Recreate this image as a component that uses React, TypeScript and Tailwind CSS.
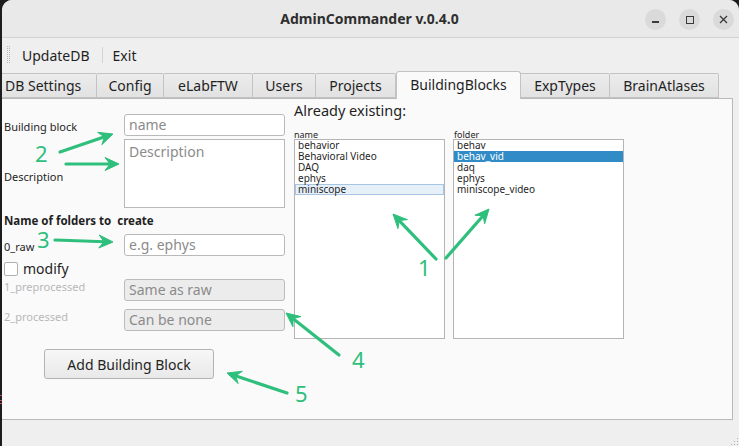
import React from "react";

const GREEN = "#2fbf7c";

function Arrow({ x1, y1, x2, y2 }: { x1: number; y1: number; x2: number; y2: number }) {
  const dx = x2 - x1;
  const dy = y2 - y1;
  const len = Math.sqrt(dx * dx + dy * dy);
  const ux = dx / len;
  const uy = dy / len;
  const nx = -uy;
  const ny = ux;
  const back = 14;
  const notch = 9;
  const half = 6.5;
  const bx = x2 - ux * back;
  const by = y2 - uy * back;
  const pts = [
    [x2, y2],
    [bx + nx * half, by + ny * half],
    [x2 - ux * notch, y2 - uy * notch],
    [bx - nx * half, by - ny * half],
  ]
    .map((p) => p.join(","))
    .join(" ");
  return (
    <g>
      <line
        x1={x1}
        y1={y1}
        x2={x2 - ux * (notch - 1)}
        y2={y2 - uy * (notch - 1)}
        stroke={GREEN}
        strokeWidth={3.2}
        strokeLinecap="round"
      />
      <polygon points={pts} fill={GREEN} stroke={GREEN} strokeWidth={1} strokeLinejoin="round" />
    </g>
  );
}

const tabs: { label: string; w: number; selected?: boolean; left?: boolean }[] = [
  { label: "DB Settings", w: 95, left: true },
  { label: "Config", w: 67 },
  { label: "eLabFTW", w: 89 },
  { label: "Users", w: 63 },
  { label: "Projects", w: 80 },
  { label: "BuildingBlocks", w: 125, selected: true },
  { label: "ExpTypes", w: 89 },
  { label: "BrainAtlases", w: 109 },
];

const names = ["behavior", "Behavioral Video", "DAQ", "ephys", "miniscope"];
const folders = ["behav", "behav_vid", "daq", "ephys", "miniscope_video"];

function TextInput({ placeholder, disabled }: { placeholder: string; disabled?: boolean }) {
  return (
    <div
      className={
        "w-[161px] h-[22px] rounded-[3px] border flex items-center pl-[4px] text-[14px] leading-[18px] text-[#8b8b8b] " +
        (disabled ? "bg-[#ececec] border-[#bcbcbc]" : "bg-white border-[#b9b9b9]")
      }
    >
      {placeholder}
    </div>
  );
}

export default function App() {
  return (
    <div
      className="relative w-[739px] h-[446px] overflow-hidden bg-[#1d1d1f] flex"
      style={{ fontFamily: '"Noto Sans", "DejaVu Sans", sans-serif' }}
    >
      {/* left desktop strip */}
      <div className="w-[2px] h-full relative">
        <div className="absolute left-0 top-[395px] w-[2px] h-[1px] bg-[#c0505a]" />
        <div className="absolute left-0 top-[400px] w-[2px] h-[1px] bg-[#c0505a]" />
        <div className="absolute left-0 top-[403px] w-[2px] h-[1px] bg-[#c0505a]" />
      </div>

      {/* window */}
      <div className="w-[737px] h-full rounded-t-[10px] bg-[#efefef] flex flex-col overflow-hidden">
        {/* title bar */}
        <div className="h-[38px] bg-[#e9e9e9] border-b border-[#d2d2d2] relative flex items-center justify-center shrink-0">
          <div className="text-[14px] font-bold text-[#2f2f2f] ml-[-2px] mt-[-1px]">AdminCommander v.0.4.0</div>
          <div className="absolute right-[5px] top-[9px] flex gap-[13px]">
            <div className="w-[21px] h-[21px] rounded-full bg-[#dadada] flex items-center justify-center">
              <div className="w-[7px] h-[1.5px] bg-[#3a3a3a] mt-[5px]" />
            </div>
            <div className="w-[21px] h-[21px] rounded-full bg-[#dadada] flex items-center justify-center">
              <div className="w-[8px] h-[8px] border border-[#3a3a3a]" />
            </div>
            <div className="w-[21px] h-[21px] rounded-full bg-[#dadada] flex items-center justify-center">
              <svg width="9" height="9" viewBox="0 0 9 9">
                <path d="M1 1 L8 8 M8 1 L1 8" stroke="#3a3a3a" strokeWidth="1.3" />
              </svg>
            </div>
          </div>
        </div>

        {/* menu bar */}
        <div className="h-[33px] flex items-center shrink-0 text-[14px] text-[#1f1f1f]">
          <div className="ml-[5px] w-[4px] h-[17px] flex gap-[1px]">
            <div className="w-[1px] h-full border-l border-dotted border-[#b8b8b8]" />
            <div className="w-[1px] h-full border-l border-dotted border-[#b8b8b8]" />
          </div>
          <div className="ml-[11px] mt-[1px]">UpdateDB</div>
          <div className="ml-[12px] w-[1px] h-[16px] bg-[#d4d4d4]" />
          <div className="ml-[10px] mt-[1px]">Exit</div>
        </div>

        {/* tabs */}
        <div className="h-[27px] flex items-end shrink-0 relative">
          {tabs.map((t) =>
            t.selected ? (
              <div
                key={t.label}
                style={{ width: t.w }}
                className="h-[28px] bg-[#fafafa] border border-b-0 border-[#c3c3c3] rounded-t-[3px] flex items-center justify-center text-[14px] text-[#1f1f1f] relative z-10 -mb-[1px] pb-[2px]"
              >
                {t.label}
              </div>
            ) : (
              <div
                key={t.label}
                style={{ width: t.w }}
                className={
                  "h-[25px] bg-gradient-to-b from-[#ececec] to-[#e2e2e2] border border-[#c3c3c3] border-l-0 rounded-tr-[2px] flex items-center text-[14px] text-[#1f1f1f] " +
                  (t.left ? "justify-start pl-[3px]" : "justify-center")
                }
              >
                {t.label}
              </div>
            )
          )}
        </div>

        {/* panel */}
        <div className="w-[731px] h-[322px] bg-[#fafafa] border-t border-r border-b border-[#b9b9b9] flex pl-[2px] shrink-0">
          {/* left column */}
          <div className="w-[290px] pt-[15px] flex flex-col text-[#1f1f1f]">
            <div className="flex h-[22px]">
              <div className="w-[120px] text-[11px] leading-[14px] pt-[6px]">Building block</div>
              <TextInput placeholder="name" />
            </div>
            <div className="flex h-[69px] mt-[3px]">
              <div className="w-[120px] text-[11px] leading-[14px] pt-[31px]">Description</div>
              <div className="w-[161px] h-[69px] bg-white border border-[#b9b9b9] pl-[4px] pt-[3px] text-[14px] leading-[18px] text-[#8b8b8b]">
                Description
              </div>
            </div>
            <div className="mt-[5px] h-[16px] text-[11.5px] leading-[16px] font-bold whitespace-pre">
              Name of folders to  create
            </div>
            <div className="flex h-[22px] mt-[5px]">
              <div className="w-[120px] text-[11px] leading-[14px] pt-[6px]">0_raw</div>
              <TextInput placeholder="e.g. ephys" />
            </div>
            <div className="flex items-center h-[14px] mt-[6px]">
              <div className="w-[14px] h-[14px] bg-white border border-[#b0b0b0] rounded-[2px]" />
              <div className="ml-[5px] text-[14px] leading-[14px]">modify</div>
            </div>
            <div className="flex h-[22px] mt-[3px]">
              <div className="w-[120px] text-[11px] leading-[14px] pt-[1px] text-[#b8b8b8]">1_preprocessed</div>
              <TextInput placeholder="Same as raw" disabled />
            </div>
            <div className="flex h-[22px] mt-[8px]">
              <div className="w-[120px] text-[11px] leading-[14px] pt-[1px] text-[#b8b8b8]">2_processed</div>
              <TextInput placeholder="Can be none" disabled />
            </div>
            <div className="mt-[18px] ml-[40px] w-[170px] h-[30px] rounded-[3px] border border-[#b3b3b3] bg-gradient-to-b from-[#f7f7f7] to-[#e9e9e9] flex items-center justify-center text-[14px] text-[#1f1f1f]">
              Add Building Block
            </div>
          </div>

          {/* right column */}
          <div className="pt-[2px] flex flex-col">
            <div className="text-[14.5px] leading-[18px] text-[#1f1f1f]">Already existing:</div>
            <div className="flex mt-[12px]">
              <div className="flex flex-col">
                <div className="h-[8px] text-[9px] leading-[8px] text-[#1f1f1f]">name</div>
                <div className="w-[151px] h-[200px] bg-white border border-[#b4b4b4]">
                  {names.map((n, i) =>
                    i === 4 ? (
                      <div
                        key={n}
                        className="h-[11px] text-[10px] leading-[9px] text-[#1f1f1f] bg-[#e6f0f9] border border-[#a8c6e2] pl-[2px]"
                      >
                        {n}
                      </div>
                    ) : (
                      <div key={n} className="h-[11px] text-[10px] leading-[11px] text-[#1f1f1f] pl-[3px]">
                        {n}
                      </div>
                    )
                  )}
                </div>
              </div>
              <div className="flex flex-col ml-[8px]">
                <div className="h-[8px] text-[9px] leading-[8px] text-[#1f1f1f] pl-[1px]">folder</div>
                <div className="w-[171px] h-[200px] bg-white border border-[#b4b4b4]">
                  {folders.map((n, i) => (
                    <div
                      key={n}
                      className={
                        "h-[11px] text-[10px] leading-[11px] pl-[3px] " +
                        (i === 1 ? "bg-[#308bc6] text-white" : "text-[#1f1f1f]")
                      }
                    >
                      {n}
                    </div>
                  ))}
                </div>
              </div>
            </div>
          </div>
        </div>

        {/* status area */}
        <div className="flex-1 relative">
          <div className="absolute right-[1px] bottom-[1px] grid grid-cols-3 gap-[2px]">
            {[0, 0, 1, 0, 1, 1, 1, 1, 1].map((v, i) => (
              <div key={i} className={"w-[1px] h-[1px] " + (v ? "bg-[#b0b0b0]" : "bg-transparent")} />
            ))}
          </div>
        </div>
      </div>

      {/* annotations overlay */}
      <svg className="absolute inset-0 pointer-events-none" width="739" height="446">
        <Arrow x1={60} y1={152} x2={113} y2={134} />
        <Arrow x1={66} y1={164} x2={119} y2={164} />
        <Arrow x1={55} y1={240} x2={113} y2={242} />
        <Arrow x1={436} y1={259} x2={393} y2={214} />
        <Arrow x1={446} y1={258} x2={489} y2={209} />
        <Arrow x1={339} y1={355} x2={286} y2={313} />
        <Arrow x1={287} y1={393} x2={227} y2={373} />
      </svg>
      <div className="absolute left-[35px] top-[140px] text-[22px] leading-[26px] pointer-events-none" style={{ color: GREEN }}>
        2
      </div>
      <div className="absolute left-[37px] top-[226px] text-[22px] leading-[26px] pointer-events-none" style={{ color: GREEN }}>
        3
      </div>
      <div className="absolute left-[418px] top-[254px] text-[22px] leading-[26px] pointer-events-none" style={{ color: GREEN }}>
        1
      </div>
      <div className="absolute left-[352px] top-[346px] text-[22px] leading-[26px] pointer-events-none" style={{ color: GREEN }}>
        4
      </div>
      <div className="absolute left-[295px] top-[380px] text-[22px] leading-[26px] pointer-events-none" style={{ color: GREEN }}>
        5
      </div>
    </div>
  );
}
